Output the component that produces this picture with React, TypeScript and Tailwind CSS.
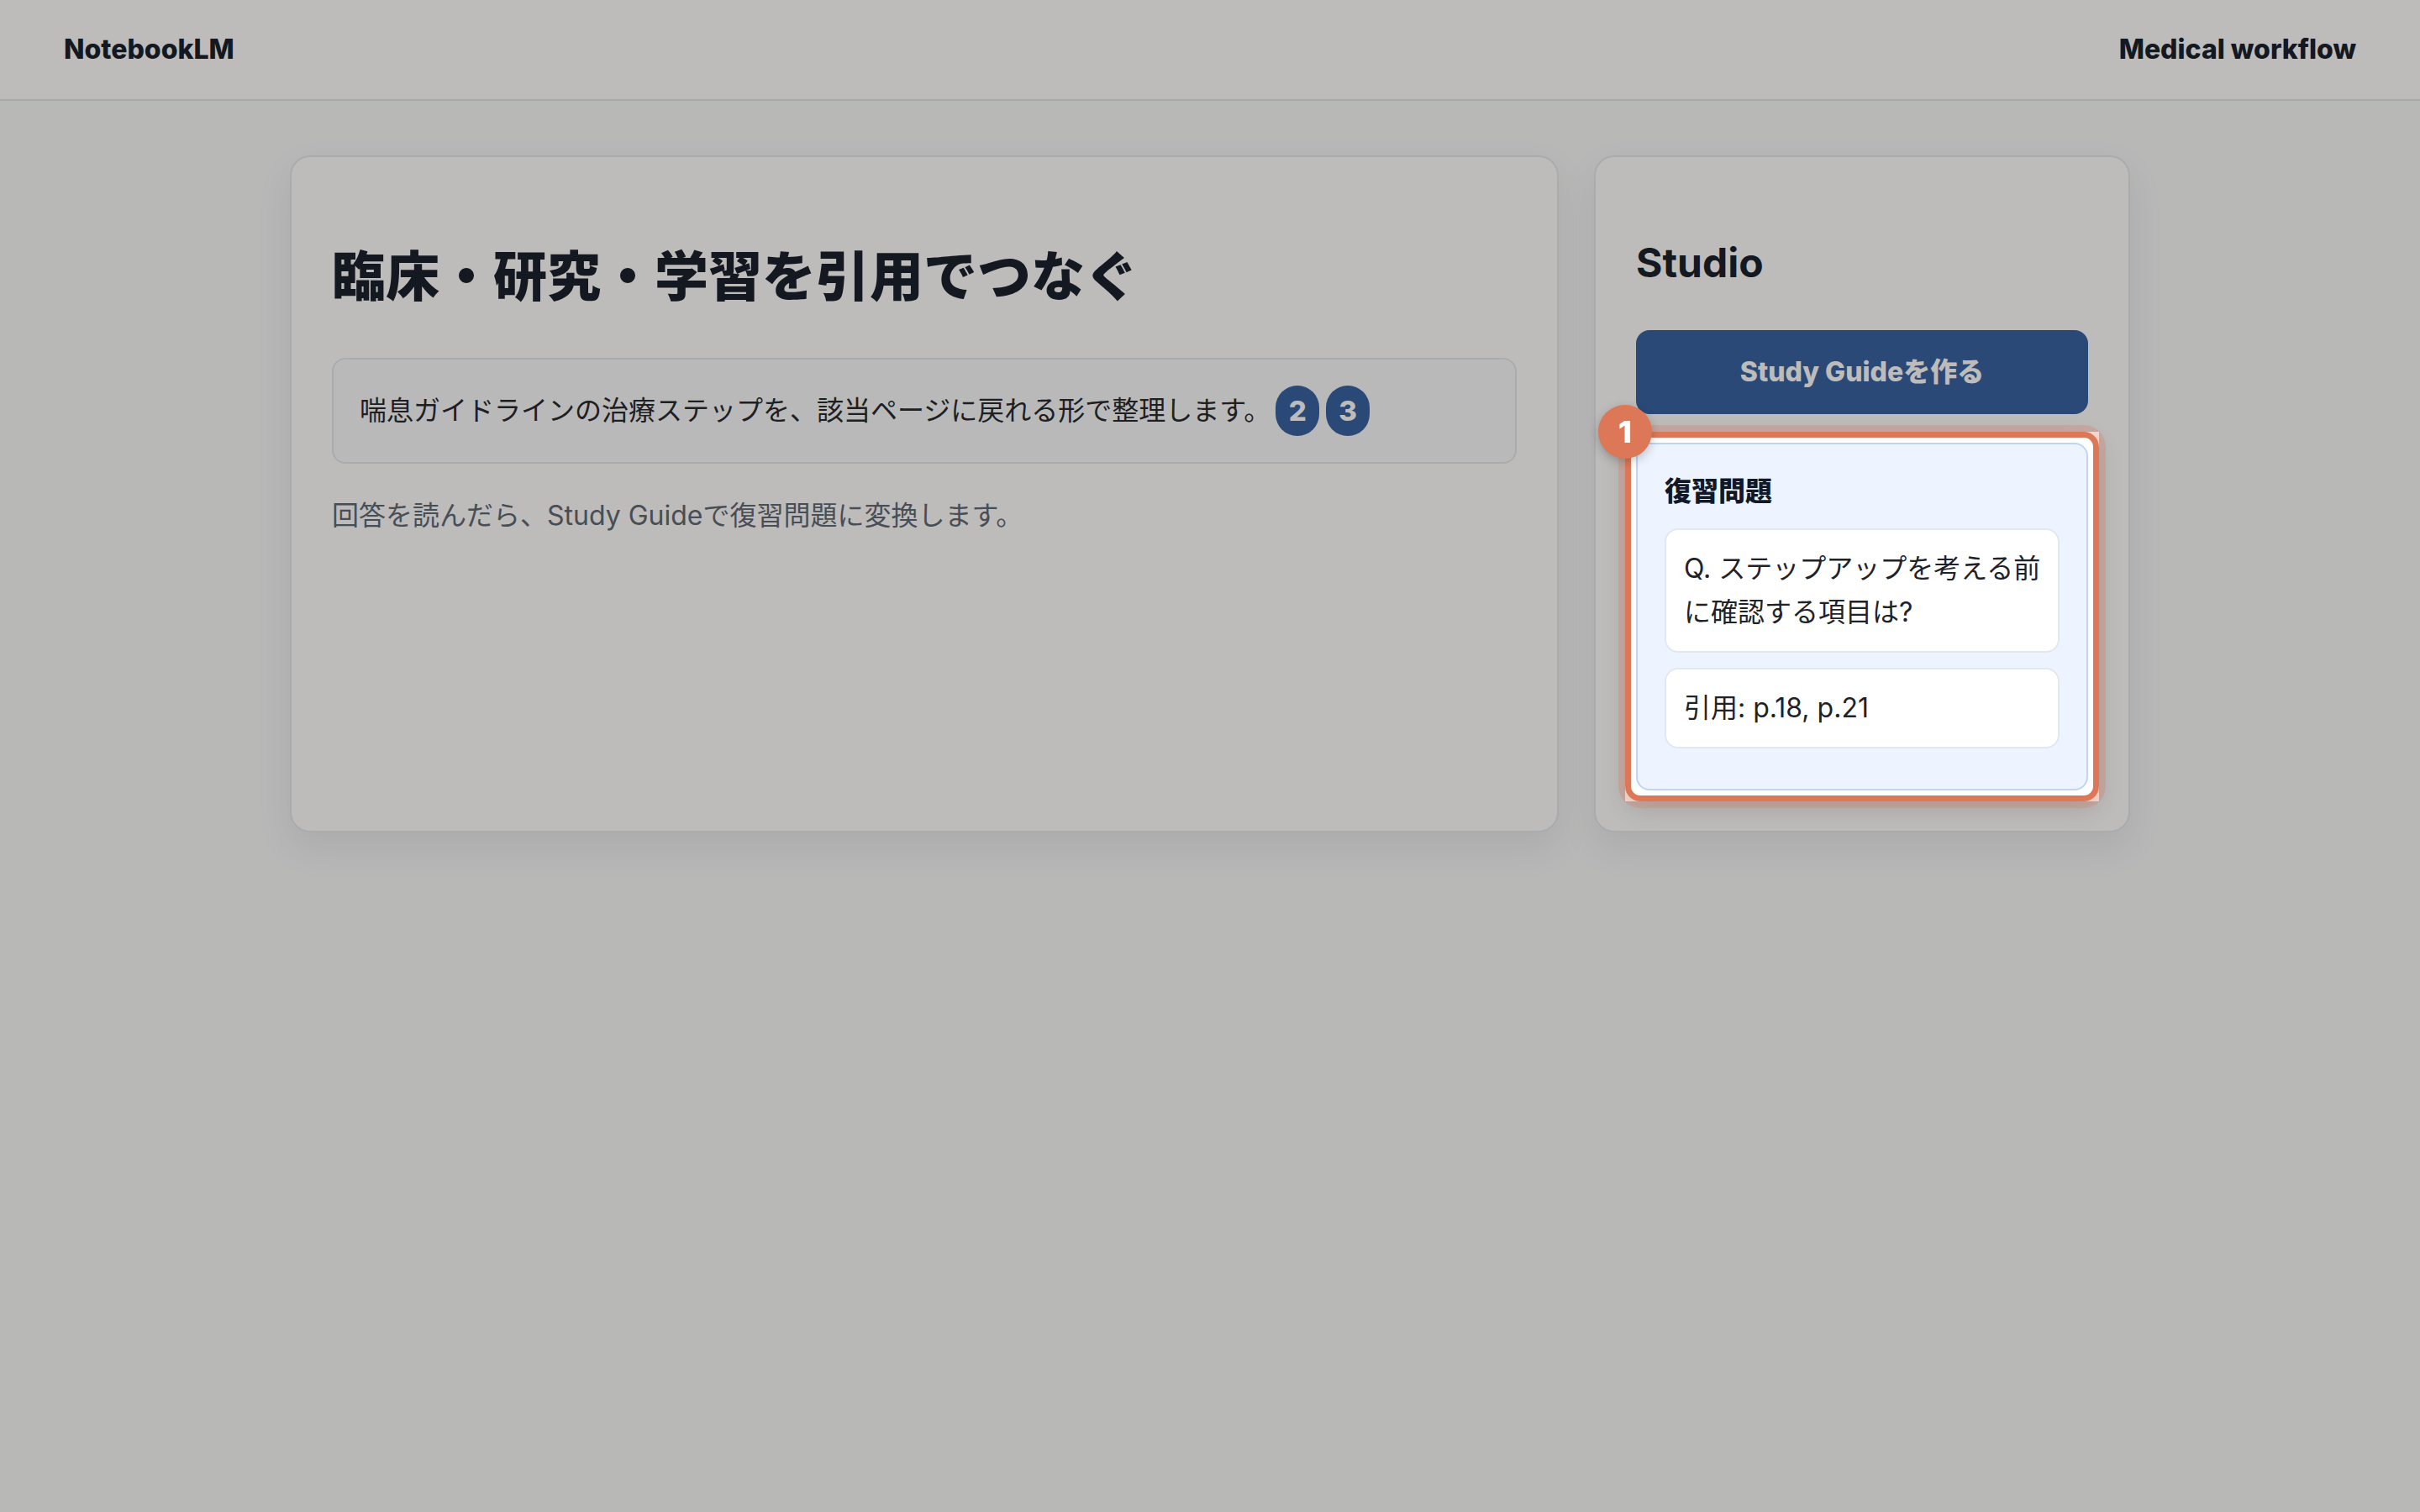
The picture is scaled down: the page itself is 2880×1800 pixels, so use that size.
// NotebookLM medical workflow – spotlight on the Study Guide result
const FONT = "font-['Inter','Noto_Sans_CJK_JP',sans-serif]";

function CiteBadge({ n }: { n: number }) {
  return (
    <span className="inline-flex h-[60px] min-w-[52px] items-center justify-center rounded-full bg-[#305e9e] px-[15px] text-[33px] font-extrabold leading-none text-white">
      {n}
    </span>
  );
}

function ReviewCard() {
  return (
    <div className="rounded-[16px] border-2 border-[#bfd4f7] bg-[#eef4ff] px-[32px] pb-[48px] pt-[32px]">
      <h3 className="text-[32px] font-extrabold leading-[48px] text-[#111827]">復習問題</h3>
      <div className="mt-[20px] rounded-[16px] border-2 border-[#e2e8f0] bg-white px-[21px] py-[20px] text-[32px] leading-[52px] text-[#1f2329]">
        <p className="whitespace-nowrap">
          Q. ステップアップを考える前
          <br />
          に確認する項目は?
        </p>
      </div>
      <div className="mt-[18px] rounded-[16px] border-2 border-[#e2e8f0] bg-white px-[21px] py-[20px] text-[32px] leading-[52px] text-[#1f2329]">
        引用: p.18, p.21
      </div>
    </div>
  );
}

export default function App() {
  return (
    <div className={`min-h-screen bg-[#f8f9fa] text-[#111827] ${FONT}`}>
      <header className="flex h-[120px] items-center justify-between border-b-2 border-[#e2e4e8] bg-white px-[76px]">
        <span className="text-[32px] font-extrabold">NotebookLM</span>
        <span className="text-[32px] font-extrabold">Medical workflow</span>
      </header>

      <main className="mx-auto grid w-[2190px] grid-cols-[1fr_638px] gap-[42px] pt-[65px]">
        {/* メインのノート */}
        <section className="rounded-[24px] border-2 border-[#e5e7eb] bg-white p-[48px] shadow-[0_18px_44px_rgba(15,23,42,0.08)]">
          <h1 className="mt-[54px] text-[64px] font-black leading-[80px]">臨床・研究・学習を引用でつなぐ</h1>
          <div className="mt-[57px] flex items-center rounded-[16px] border-2 border-[#e5e7eb] bg-[#fafbfc] px-[31px] py-[31px]">
            <span className="text-[32px] leading-[48px] text-[#1f2329]">
              喘息ガイドラインの治療ステップを、該当ページに戻れる形で整理します。
            </span>
            <div className="ml-[6px] flex gap-[8px]">
              <CiteBadge n={2} />
              <CiteBadge n={3} />
            </div>
          </div>
          <p className="mt-[38px] text-[32px] leading-[48px] text-[#5b6470]">
            回答を読んだら、Study Guideで復習問題に変換します。
          </p>
        </section>

        {/* Studio */}
        <aside className="rounded-[24px] border-2 border-[#e5e7eb] bg-white p-[48px] shadow-[0_18px_44px_rgba(15,23,42,0.08)]">
          <h2 className="mt-[46px] text-[48px] font-bold leading-[64px]">Studio</h2>
          <button className="mt-[48px] flex h-[100px] w-full items-center justify-center rounded-[16px] bg-[#305e9e] text-[32px] font-extrabold text-white">
            Study Guideを作る
          </button>

          <div className="relative mt-[34px]">
            {/* dim layer with a square hole */}
            <div className="pointer-events-none absolute -inset-[13px] z-40 shadow-[0_0_0_9999px_rgba(28,25,22,0.29)]" />
            {/* ring */}
            <div className="pointer-events-none absolute -inset-[13px] z-50 rounded-[18px] border-[7px] border-[#dc7858] shadow-[0_0_0_8px_rgba(220,120,88,0.28),0_10px_30px_rgba(0,0,0,0.12)]" />
            <div className="absolute left-[-45px] top-[-45px] z-50 flex h-[64px] w-[64px] items-center justify-center rounded-full bg-[#dc7858] text-[36px] font-extrabold leading-none text-white shadow-[0_4px_12px_rgba(0,0,0,0.22)]">
              1
            </div>
            <ReviewCard />
          </div>
        </aside>
      </main>
    </div>
  );
}
